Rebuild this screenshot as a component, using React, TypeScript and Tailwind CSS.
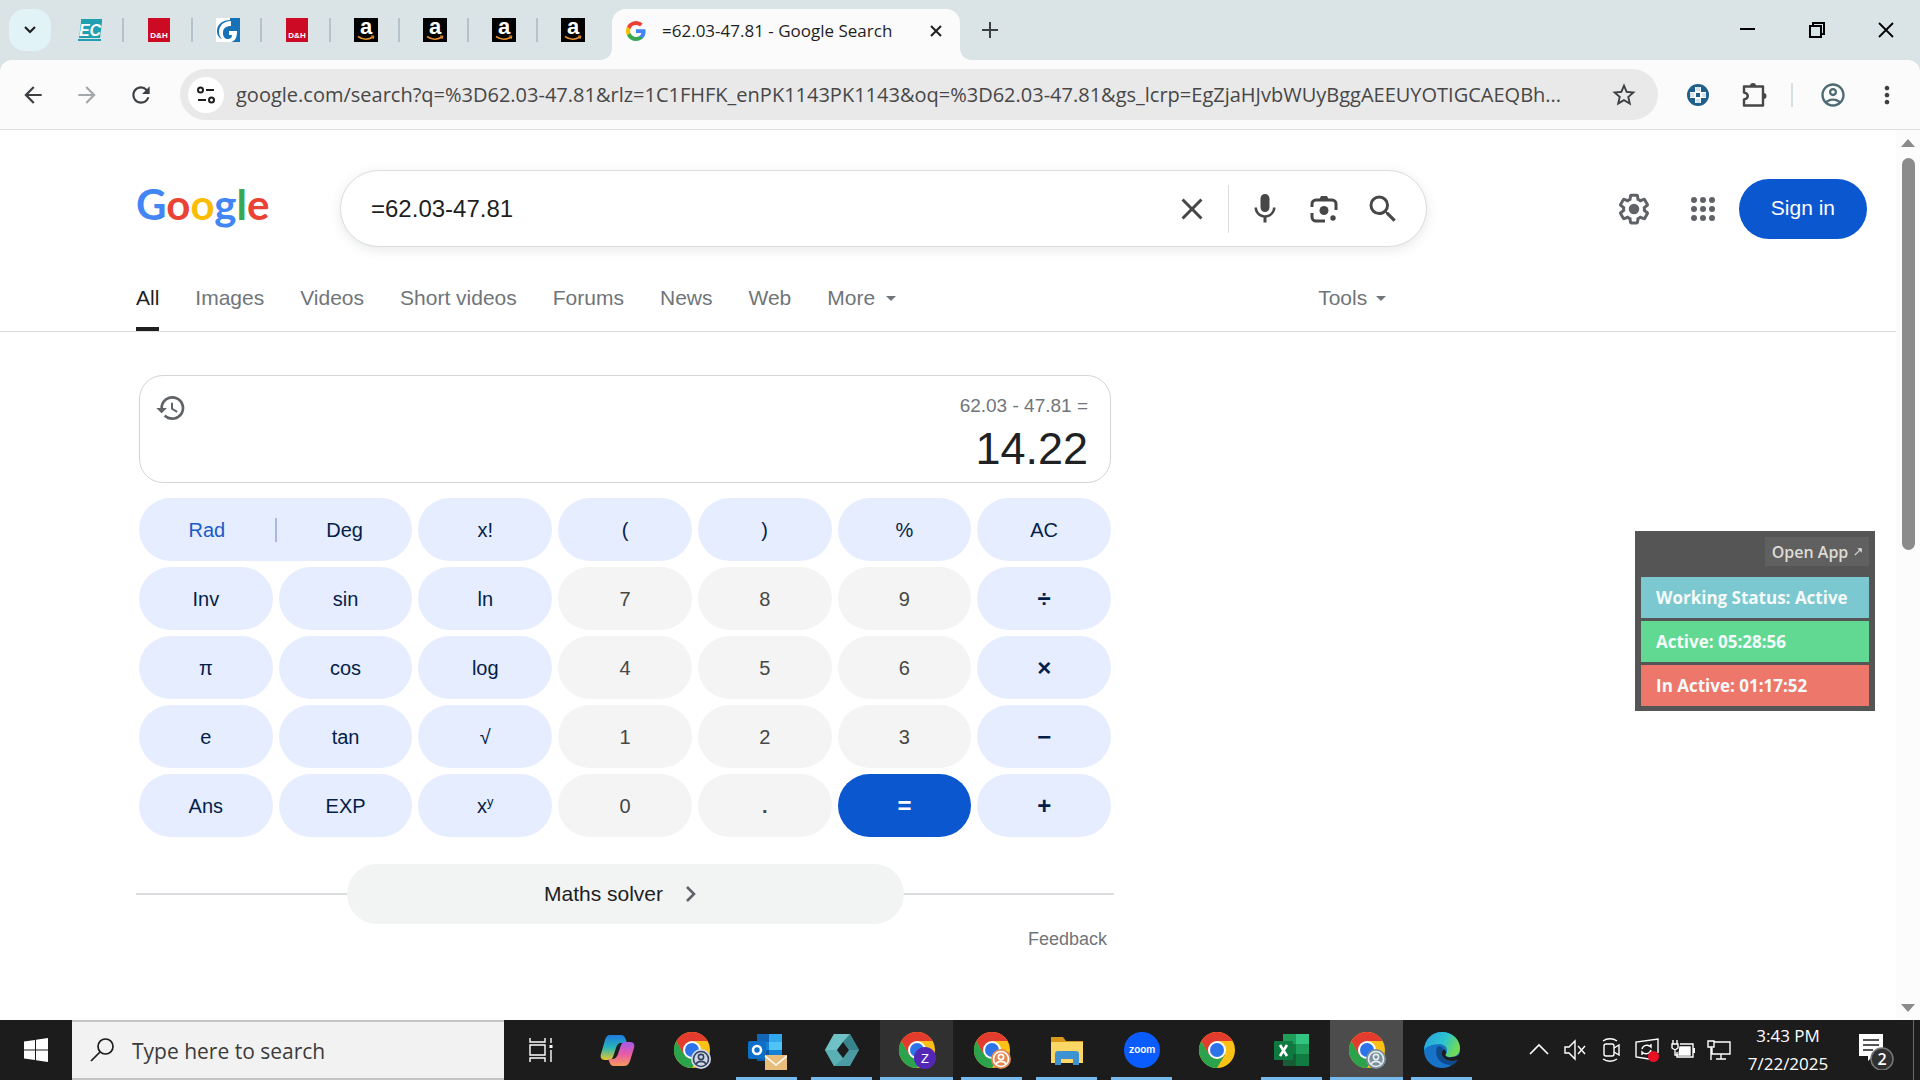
import type { ReactNode } from "react";
import clsx from "clsx";
import {
  MdArrowBack,
  MdArrowForward,
  MdClose,
  MdHistory,
  MdMic,
  MdMoreVert,
  MdOutlineAccountCircle,
  MdRefresh,
  MdSearch,
  MdStarOutline,
} from "react-icons/md";

const UI_FONT = "font-['Segoe_UI','Open_Sans','Noto_Sans',sans-serif]";
const PAGE_FONT = "font-['Liberation_Sans',Arial,sans-serif]";

/* ---------- favicons ---------- */

function EcIcon() {
  return (
    <svg viewBox="0 0 24 24" className="size-6 overflow-visible">
      <path d="M3 1h21v3l-2 16H1l2-16z" fill="#1f9fb0" />
      <rect y="21" width="23" height="2" fill="#1f9fb0" />
      <text x="12" y="18" textAnchor="middle" fontFamily="Liberation Sans" fontSize="16" fontWeight="700" fontStyle="italic" fill="#fff">
        EC
      </text>
    </svg>
  );
}

function DhIcon() {
  return (
    <svg viewBox="0 0 24 24" className="size-6">
      <rect x="1" width="22" height="24" fill="#cc0a24" />
      <text x="12" y="20" textAnchor="middle" fontFamily="Liberation Sans" fontSize="8" fontWeight="700" fill="#fff">
        D&amp;H
      </text>
    </svg>
  );
}

function BlueGIcon() {
  return (
    <svg viewBox="0 0 24 24" className="size-6">
      <rect width="24" height="24" fill="#fff" />
      <path d="M14 0h10v24h-9c4-1 6-4 6-11h-8v4h3c0 3-2 4-4 4-3 0-5-2-5-6 0-5 3-7 8-7V3C7 3 3 8 3 14c0 3 1 5 3 7-3-1-5-4-5-8C1 6 7 2 14 2z" fill="#1673b8" />
    </svg>
  );
}

function AmazonIcon() {
  return (
    <svg viewBox="0 0 24 24" className="size-6 overflow-visible">
      <rect width="24" height="24" fill="#000" />
      <text x="12" y="16" textAnchor="middle" fontFamily="Liberation Sans" fontSize="22" fontWeight="700" fill="#fff">
        a
      </text>
      <path d="M4 18.500c5 3.500 10 3.500 15 .5" stroke="#e8912d" strokeWidth="1.600" fill="none" />
      <path d="M17 18h3l-1 3" stroke="#e8912d" strokeWidth="1" fill="none" />
    </svg>
  );
}

function GoogleG() {
  return (
    <svg viewBox="0 0 24 24" className="size-5">
      <path fill="#4285f4" d="M23.500 12.300c0-.8-.1-1.600-.2-2.300H12v4.500h6.500a5.500 5.500 0 0 1-2.400 3.600v3h3.900c2.300-2.100 3.500-5.200 3.500-8.800z" />
      <path fill="#34a853" d="M12 24c3.200 0 6-1.100 8-2.900l-3.900-3a7.200 7.200 0 0 1-10.800-3.800H1.300v3.100A12 12 0 0 0 12 24z" />
      <path fill="#fbbc05" d="M5.300 14.300a7.200 7.200 0 0 1 0-4.600V6.600H1.300a12 12 0 0 0 0 10.800z" />
      <path fill="#ea4335" d="M12 4.800c1.800 0 3.300.6 4.600 1.800l3.400-3.400A12 12 0 0 0 1.300 6.600l4 3.100A7.200 7.200 0 0 1 12 4.800z" />
    </svg>
  );
}

const pinnedTabs = [
  { name: "EC", icon: <EcIcon /> },
  { name: "D&H", icon: <DhIcon /> },
  { name: "G store", icon: <BlueGIcon /> },
  { name: "D&H orders", icon: <DhIcon /> },
  { name: "Amazon 1", icon: <AmazonIcon /> },
  { name: "Amazon 2", icon: <AmazonIcon /> },
  { name: "Amazon 3", icon: <AmazonIcon /> },
  { name: "Amazon 4", icon: <AmazonIcon /> },
];

/* ---------- browser chrome ---------- */

function TabStrip() {
  return (
    <div className="flex h-[60px] items-center bg-[#dae4e6]">
      <button aria-label="Search tabs" className="ml-[9px] flex size-[42px] items-center justify-center rounded-2xl bg-[#e2f3f8]">
        <svg viewBox="0 0 12 8" className="h-2 w-3" fill="none" stroke="#1f1f1f" strokeWidth="2.200">
          <path d="M1 1l5 5 5-5" />
        </svg>
      </button>
      <div className="ml-1 flex items-center">
        {pinnedTabs.map((tab, i) => (
          <div key={tab.name} className="flex w-[69px] items-center justify-between">
            <button aria-label={tab.name} className="ml-[23px]">
              {tab.icon}
            </button>
            {i < pinnedTabs.length - 1 && <span className="h-6 w-[2px] bg-[#b3c3c9]" />}
          </div>
        ))}
      </div>
      <div className="ml-[-7px] flex h-full items-end">
        <svg viewBox="0 0 12 12" className="size-3" fill="#fbfbfb">
          <path d="M12 0v12H0C7 12 12 7 12 0z" />
        </svg>
        <div className="flex h-[51px] w-[348px] items-center rounded-t-[14px] bg-[#fbfbfb] pr-3 pb-2 pl-[14px]">
          <GoogleG />
          <span className="ml-4 flex-1 text-[17px] whitespace-nowrap text-[#1f1f1f]">=62.03-47.81 - Google Search</span>
          <button aria-label="Close tab" className="flex size-6 items-center justify-center">
            <svg viewBox="0 0 12 12" className="size-3" stroke="#1f1f1f" strokeWidth="2">
              <path d="M1 1l10 10M11 1L1 11" />
            </svg>
          </button>
        </div>
        <svg viewBox="0 0 12 12" className="size-3" fill="#fbfbfb">
          <path d="M0 0v12h12C5 12 0 7 0 0z" />
        </svg>
      </div>
      <button aria-label="New tab" className="ml-[10px]">
        <svg viewBox="0 0 16 16" className="size-4" stroke="#3c4043" strokeWidth="2">
          <path d="M8 0v16M0 8h16" />
        </svg>
      </button>
      <div className="mr-[26px] ml-auto flex items-center gap-[53px]">
        <button aria-label="Minimise">
          <svg viewBox="0 0 16 16" className="size-4" stroke="#000" strokeWidth="2">
            <path d="M0 7h15" />
          </svg>
        </button>
        <button aria-label="Restore">
          <svg viewBox="0 0 16 16" className="size-4" fill="none" stroke="#000" strokeWidth="2">
            <path d="M1 4h11v11H1zM4 4V1h11v11h-3" />
          </svg>
        </button>
        <button aria-label="Close">
          <svg viewBox="0 0 16 16" className="size-4" stroke="#000" strokeWidth="1.800">
            <path d="M1 1l14 14M15 1L1 15" />
          </svg>
        </button>
      </div>
    </div>
  );
}

function AddressBar() {
  return (
    <div className="bg-[#dae4e6]">
      <div className="flex h-[70px] items-center rounded-t-[12px] border-b border-[#dcdfe0] bg-[#fbfbfb] pl-5">
        <button aria-label="Back" className="w-[54px]">
          <MdArrowBack className="size-[26px] text-[#3c4043]" />
        </button>
        <button aria-label="Forward" className="w-[54px]">
          <MdArrowForward className="size-[26px] text-[#a5a8aa]" />
        </button>
        <button aria-label="Reload" className="w-[52px]">
          <MdRefresh className="size-[26px] text-[#3c4043]" />
        </button>
        <div className="flex h-[51px] flex-1 items-center rounded-full bg-[#e9e9ea] pr-5 pl-2">
          <button aria-label="View site information" className="flex size-9 shrink-0 items-center justify-center rounded-full bg-white">
            <svg viewBox="0 0 20 20" className="size-5" fill="none" stroke="#1f1f1f" strokeWidth="2">
              <circle cx="4.500" cy="5" r="2.500" />
              <path d="M10 5h8M2 15h8" />
              <circle cx="15.500" cy="15" r="2.500" />
            </svg>
          </button>
          <input
            aria-label="Address and search bar"
            className="ml-3 min-w-0 flex-1 bg-transparent text-[20px] text-[#474747] outline-none"
            defaultValue="google.com/search?q=%3D62.03-47.81&rlz=1C1FHFK_enPK1143PK1143&oq=%3D62.03-47.81&gs_lcrp=EgZjaHJvbWUyBggAEEUYOTIGCAEQBh..."
          />
          <button aria-label="Bookmark this tab" className="ml-4">
            <MdStarOutline className="size-7 text-[#3c4043]" />
          </button>
        </div>
        <div className="ml-[29px] flex items-center">
          <button aria-label="Extension">
            <svg viewBox="0 0 22 22" className="size-[22px]">
              <circle cx="11" cy="11" r="11" fill="#1f5f8b" />
              <path d="M8 3h6v5h5v6h-5v5H8v-5H3V8h5z" fill="#fff" />
              <path d="M9 3h4v4H9zM3 9h4v4H3zM15 9h4v4h-4zM9 15h4v4H9z" fill="#d4e4ee" />
              <path d="M9 9h4v4H9z" fill="#1f5f8b" />
            </svg>
          </button>
          <button aria-label="Extensions" className="ml-[31px]">
            <svg viewBox="0 0 28 28" className="size-7" fill="none" stroke="#474747" strokeWidth="2.400" strokeLinejoin="round">
              <path d="M4 5.500h19v19H4v-6c5-1 5-6 0-7z" />
              <path d="M10 5a3 3 0 0 1 6 0zM23.500 12a3 3 0 0 1 0 6z" fill="#474747" stroke="none" />
            </svg>
          </button>
          <span className="ml-[23px] h-6 w-[2px] bg-[#d7dfe2]" />
          <button aria-label="Profile" className="ml-[26px]">
            <MdOutlineAccountCircle className="size-[28px] text-[#4d6a72]" />
          </button>
          <button aria-label="Menu" className="mr-[19px] ml-[26px]">
            <MdMoreVert className="size-[28px] text-[#3c4043]" />
          </button>
        </div>
      </div>
    </div>
  );
}

/* ---------- search page ---------- */

function GoogleLogo() {
  return (
    <a href="#home" aria-label="Google home" className="w-[204px] shrink-0 pb-[10px] font-['Lato',sans-serif] text-[42px] leading-[50px] font-bold">
      <span className="text-[#4285f4]">G</span>
      <span className="text-[#ea4335]">o</span>
      <span className="text-[#fbbc05]">o</span>
      <span className="text-[#4285f4]">g</span>
      <span className="text-[#34a853]">l</span>
      <span className="text-[#ea4335]">e</span>
    </a>
  );
}

function LensIcon() {
  return (
    <svg viewBox="0 0 28 28" className="size-7" fill="none" stroke="#474747" strokeWidth="3">
      <path d="M2 12V9a4 4 0 0 1 4-4h16a4 4 0 0 1 4 4v6" />
      <path d="M2 18v4a4 4 0 0 0 4 4h9" />
      <path d="M9 5l2-4h6l2 4z" fill="#474747" stroke="none" />
      <circle cx="14" cy="15.500" r="4.500" fill="#474747" stroke="none" />
      <circle cx="23" cy="23" r="2.700" fill="#474747" stroke="none" />
    </svg>
  );
}

function SettingsIcon() {
  return (
    <svg viewBox="0 0 24 24" className="size-9" fill="#5f6368">
      <path d="M13.850 22.250h-3.700c-.74 0-1.360-.54-1.450-1.270l-.27-1.890c-.27-.14-.53-.29-.79-.46l-1.800.72c-.7.26-1.470-.03-1.810-.65L2.200 15.530c-.35-.66-.2-1.440.36-1.880l1.530-1.190c-.01-.15-.02-.3-.02-.46 0-.15.01-.31.02-.46l-1.520-1.190c-.59-.45-.74-1.260-.37-1.880l1.850-3.190c.34-.62 1.110-.9 1.790-.63l1.810.73c.26-.17.52-.32.78-.46l.27-1.910c.09-.7.71-1.250 1.440-1.250h3.700c.74 0 1.360.54 1.450 1.270l.27 1.890c.27.14.53.29.79.46l1.800-.72c.71-.26 1.480.03 1.820.65l1.840 3.180c.36.66.2 1.440-.36 1.880l-1.520 1.190c.01.15.02.3.02.46s-.01.31-.02.46l1.520 1.190c.56.45.72 1.230.37 1.860l-1.860 3.220c-.34.62-1.110.9-1.800.63l-1.800-.72c-.26.17-.52.32-.78.46l-.27 1.910c-.1.68-.72 1.220-1.460 1.220zm-3.230-2h2.760l.37-2.550.53-.22c.44-.18.88-.44 1.340-.78l.45-.34 2.380.96 1.380-2.400-2.030-1.580.07-.56c.03-.26.06-.51.06-.78s-.03-.53-.06-.78l-.07-.56 2.030-1.580-1.390-2.400-2.390.96-.45-.35c-.42-.32-.87-.58-1.330-.77l-.52-.22-.37-2.550h-2.760l-.37 2.550-.53.21c-.44.19-.88.44-1.340.79l-.45.33-2.380-.95-1.390 2.390 2.030 1.580-.07.56a7 7 0 0 0-.06.79c0 .26.02.53.06.78l.07.56-2.030 1.580 1.380 2.400 2.390-.96.45.35c.43.33.86.58 1.330.77l.53.22z" />
      <circle cx="12" cy="12" r="3.500" />
    </svg>
  );
}

function AppsIcon() {
  return (
    <svg viewBox="0 0 24 24" className="size-6" fill="#5f6368">
      {[3, 12, 21].map((y) => [3, 12, 21].map((x) => <circle key={`${x}-${y}`} cx={x} cy={y} r="3" />))}
    </svg>
  );
}

function Caret() {
  return <span className="border-x-[5px] border-t-[5px] border-x-transparent border-t-[#70757a]" />;
}

function SearchHeader() {
  return (
    <div className="flex items-center pt-[40px] pr-[29px] pl-[136px]">
      <GoogleLogo />
      <form className="flex h-[77px] max-w-[1087px] flex-1 items-center rounded-full border border-[#dadce0] bg-white pr-[25px] pl-[30px] shadow-[0_3px_12px_rgba(60,64,67,0.12)]">
        <input aria-label="Search" className="min-w-0 flex-1 text-[24px] text-[#1f1f1f] outline-none" defaultValue="=62.03-47.81" />
        <button type="button" aria-label="Clear">
          <MdClose className="size-9 text-[#474747]" />
        </button>
        <span className="mx-[18px] h-12 w-px bg-[#dadce0]" />
        <div className="flex items-center gap-[23px]">
          <button type="button" aria-label="Search by voice">
            <MdMic className="size-9 text-[#474747]" />
          </button>
          <button type="button" aria-label="Search by image" className="flex size-9 items-center justify-center">
            <LensIcon />
          </button>
          <button type="submit" aria-label="Google Search">
            <MdSearch className="size-9 text-[#474747]" />
          </button>
        </div>
      </form>
      <div className="ml-auto flex items-center">
        <button aria-label="Settings">
          <SettingsIcon />
        </button>
        <button aria-label="Google apps" className="ml-[39px]">
          <AppsIcon />
        </button>
        <a href="#signin" className="ml-6 flex h-[60px] items-center rounded-full bg-[#0b57d0] px-8 pb-[2px] text-[21px] text-white">
          Sign in
        </a>
      </div>
    </div>
  );
}

const sections = ["Images", "Videos", "Short videos", "Forums", "News", "Web"];

function SectionNav() {
  return (
    <nav className="mt-[31px] flex items-start border-b border-[#dadce0] pl-[136px] text-[21px] leading-10 text-[#70757a]">
      <div className="flex gap-9">
        <a href="#all" className="h-[53px] border-b-4 border-[#1f1f1f] text-[#1f1f1f]">
          All
        </a>
        {sections.map((name) => (
          <a key={name} href="#section">
            {name}
          </a>
        ))}
        <button className="flex items-center gap-[11px] self-start">
          More <Caret />
        </button>
      </div>
      <button className="ml-[422px] flex items-center gap-[9px]">
        Tools <Caret />
      </button>
    </nav>
  );
}

type Key = { label: ReactNode; name?: string; kind?: "digit" | "equals" | "operator" };

const keys: Key[] = [
  { label: "x!" },
  { label: "(" },
  { label: ")" },
  { label: "%" },
  { label: "AC" },
  { label: "Inv" },
  { label: "sin" },
  { label: "ln" },
  { label: "7", kind: "digit" },
  { label: "8", kind: "digit" },
  { label: "9", kind: "digit" },
  { label: "÷", kind: "operator" },
  { label: "π" },
  { label: "cos" },
  { label: "log" },
  { label: "4", kind: "digit" },
  { label: "5", kind: "digit" },
  { label: "6", kind: "digit" },
  { label: "×", kind: "operator" },
  { label: "e" },
  { label: "tan" },
  { label: "√" },
  { label: "1", kind: "digit" },
  { label: "2", kind: "digit" },
  { label: "3", kind: "digit" },
  { label: "−", kind: "operator" },
  { label: "Ans" },
  { label: "EXP" },
  {
    label: (
      <span>
        x<sup className="text-[13px]">y</sup>
      </span>
    ),
    name: "x to the power of y",
  },
  { label: "0", kind: "digit" },
  { label: <b>.</b>, kind: "digit" },
  { label: "=", kind: "equals" },
  { label: "+", kind: "operator" },
];

function Calculator() {
  return (
    <section aria-label="Calculator" className="w-full max-w-[978px]">
      <div className="mx-[3px] flex h-[108px] items-start justify-between rounded-[24px] border border-[#d3d5d8] px-[15px] pt-4 pr-[22px]">
        <button aria-label="History">
          <MdHistory className="size-8 text-[#5f6368]" />
        </button>
        <div className="text-right">
          <div className="text-[19px] leading-7 text-[#70757a]">62.03 - 47.81 =</div>
          <div className="mt-1 text-[45px] leading-[50px] text-[#202124]">14.22</div>
        </div>
      </div>
      <div className="mx-[3px] mt-[15px] grid grid-cols-7 gap-[6px] text-[20px] text-[#041e49]">
        <div className="col-span-2 flex h-[63px] items-center rounded-full bg-[#e6edfe]">
          <button className="flex-1 text-[#1b5bc7]">Rad</button>
          <span className="h-6 w-[2px] bg-[#aab9de]" />
          <button className="flex-1">Deg</button>
        </div>
        {keys.map((key, i) => (
          <button
            key={i}
            aria-label={key.name}
            className={clsx(
              "flex h-[63px] items-center justify-center rounded-full",
              key.kind === "digit" && "bg-[#f4f4f4] text-[#474747]",
              key.kind === "equals" && "bg-[#0b57d0] text-[24px] font-bold text-white",
              key.kind === "operator" && "bg-[#e6edfe] text-[24px] font-bold",
              !key.kind && "bg-[#e6edfe]",
            )}
          >
            {key.label}
          </button>
        ))}
      </div>
      <div className="mt-[27px] flex items-center">
        <span className="h-[2px] flex-1 bg-[#dadce0]" />
        <button className="flex h-[60px] w-[557px] items-center justify-center gap-[23px] rounded-full bg-[#f2f3f3] pr-[10px] text-[21px] text-[#202124]">
          Maths solver
          <svg viewBox="0 0 10 16" className="h-4 w-[10px]" fill="none" stroke="#5f6368" strokeWidth="2.600">
            <path d="M1 1l7 7-7 7" />
          </svg>
        </button>
        <span className="h-[2px] flex-1 bg-[#dadce0]" />
      </div>
      <div className="mt-[2px] flex justify-end pr-[7px]">
        <a href="#feedback" className="text-[18px] leading-[26px] text-[#70757a]">
          Feedback
        </a>
      </div>
    </section>
  );
}

function ScrollBar() {
  return (
    <div className="flex w-6 flex-col items-center bg-[#fcfcfc] pt-[9px] pb-2">
      <span className="border-x-[7px] border-b-8 border-x-transparent border-b-[#8b8b8b]" />
      <span className="mt-[11px] h-[392px] w-[13px] rounded-full bg-[#8b8b8b]" />
      <span className="mt-auto border-x-[7px] border-t-8 border-x-transparent border-t-[#8b8b8b]" />
    </div>
  );
}

function StatusWidget() {
  return (
    <aside className="absolute top-[531px] right-[45px] w-[240px] bg-[#555555] p-[6px] pb-[5px] text-[17px] font-bold text-[#f5fbfa]">
      <button className="ml-auto flex h-[29px] w-[104px] items-center justify-center gap-[6px] bg-[#606060] font-['Open_Sans',sans-serif] text-[16px] font-semibold text-[#dedbd6]">
        Open App
        <svg viewBox="0 0 10 10" className="size-2" stroke="#dedbd6" strokeWidth="1.500" fill="#dedbd6">
          <path d="M1 9l6-6" />
          <path d="M6 1h3v3z" />
        </svg>
      </button>
      <div className="mt-[11px] flex flex-col gap-[3px]">
        <div className="flex h-[41px] items-center bg-[#7bc8d0] pl-[15px]">Working Status: Active</div>
        <div className="flex h-[41px] items-center bg-[#62d993] pl-[15px]">Active: 05:28:56</div>
        <div className="flex h-[41px] items-center bg-[#ee776b] pl-[15px]">In Active: 01:17:52</div>
      </div>
    </aside>
  );
}

/* ---------- taskbar ---------- */

function ChromeIcon({ badge }: { badge?: ReactNode }) {
  return (
    <svg viewBox="0 0 40 40" className="size-10">
      <circle cx="20" cy="20" r="18" fill="#fbc116" />
      <path d="M4.400 11A18 18 0 0 0 20 38l8-13.500L12.200 24.500z" fill="#2ba24c" />
      <path d="M4.400 11A18 18 0 0 1 35.600 11H20l-8 13.500z" fill="#e33b2e" />
      <circle cx="20" cy="20" r="9" fill="#fff" />
      <circle cx="20" cy="20" r="7" fill="#2c74e8" />
      {badge}
    </svg>
  );
}

function PersonBadge({ ring, fill }: { ring: string; fill: string }) {
  return (
    <g fill="none" stroke={ring} strokeWidth="1.600">
      <circle cx="29" cy="29" r="10" fill={fill} stroke="none" />
      <circle cx="29" cy="29" r="7.500" />
      <circle cx="29" cy="27" r="2.600" />
      <path d="M24 34c2-3.500 8-3.500 10 0" />
    </g>
  );
}

function CopilotIcon() {
  return (
    <svg viewBox="0 0 40 40" className="size-10">
      <defs>
        <linearGradient id="copilot-left" x1="0" y1="0" x2="0" y2="1">
          <stop offset="0" stopColor="#1f7ae0" />
          <stop offset="0.500" stopColor="#27b5b8" />
          <stop offset="1" stopColor="#e8c72e" />
        </linearGradient>
        <linearGradient id="copilot-right" x1="0" y1="0" x2="0" y2="1">
          <stop offset="0" stopColor="#a45ae8" />
          <stop offset="0.500" stopColor="#e85aa8" />
          <stop offset="1" stopColor="#f59a5a" />
        </linearGradient>
      </defs>
      <path d="M13 5h11c3 0 4 2 5 5l1 3h-5c-4 0-5 2-6 5l-3 9c-1 2-2 3-4 3H8c-4 0-5-3-4-6l4-14c1-3 2-5 5-5z" fill="url(#copilot-left)" />
      <path d="M27 36H17c-3 0-4-2-5-5l-1-2h4c3 0 5-2 6-5l3-9c1-2 2-3 4-3h5c4 0 5 3 4 6l-4 13c-1 3-3 5-6 5z" fill="url(#copilot-right)" />
    </svg>
  );
}

function OutlookIcon() {
  return (
    <svg viewBox="0 0 40 40" className="size-10">
      <path d="M10 4h25v27H10z" fill="#1282d6" />
      <path d="M10 4h12v8H10z" fill="#1066b5" />
      <path d="M22 4h13v8H22z" fill="#31a8ee" />
      <path d="M22 12h13v8H22z" fill="#50c5f5" />
      <path d="M10 20h12v11H10z" fill="#0c59a4" />
      <rect x="1" y="11" width="18" height="18" rx="2" fill="#0f6fc6" />
      <circle cx="10" cy="20" r="4" fill="none" stroke="#fff" strokeWidth="2.600" />
      <rect x="18" y="25" width="22" height="15" fill="#e9bd7c" />
      <path d="M18 26l11 9 11-9" fill="none" stroke="#fff" strokeWidth="1.500" />
    </svg>
  );
}

function HexIcon() {
  return (
    <svg viewBox="0 0 40 40" className="size-10">
      <path d="M12 4h16l9 16-9 16H12L3 20z" fill="#4a9ba3" />
      <path d="M12 4h16l-7 8-7 9-11-1z" fill="#6fc1c6" />
      <path d="M3 20h11l7 9-9 7z" fill="#5bb0b6" />
      <path d="M28 4l9 16h-9l-7-8z" fill="#37848d" />
      <path d="M21 12l6 8-6 8-6-8z" fill="#1c1c1c" />
    </svg>
  );
}

function FolderIcon() {
  return (
    <svg viewBox="0 0 40 40" className="size-10">
      <path d="M4 7h12l3 4h17v6H4z" fill="#d99a1c" />
      <path d="M4 12h32v21H4z" fill="#fbd765" />
      <path d="M8 35V24a3 3 0 0 1 3-3h18a3 3 0 0 1 3 3v11h-6v-6H14v6z" fill="#3f92d2" />
    </svg>
  );
}

function ZoomIcon() {
  return (
    <svg viewBox="0 0 40 40" className="size-10">
      <circle cx="20" cy="20" r="18" fill="#0b5cff" />
      <text x="20" y="23" textAnchor="middle" fontFamily="Inter" fontSize="10" fontWeight="600" fill="#fff">
        zoom
      </text>
    </svg>
  );
}

function ExcelIcon() {
  return (
    <svg viewBox="0 0 40 40" className="size-10">
      <path d="M11 4h26v32H11z" fill="#1f9d5b" />
      <path d="M24 4h13v10H24z" fill="#33c481" />
      <path d="M11 14h13v10H11z" fill="#107c41" />
      <path d="M11 24h26v12H11z" fill="#185c37" />
      <path d="M24 24h13v12H24z" fill="#107c41" />
      <rect x="2" y="11" width="19" height="19" rx="1" fill="#0f7a40" />
      <path d="M8 15l7 11M15 15L8 26" stroke="#fff" strokeWidth="2.600" />
    </svg>
  );
}

function EdgeIcon() {
  return (
    <svg viewBox="0 0 40 40" className="size-10">
      <defs>
        <linearGradient id="edge-top" x1="0" y1="0" x2="1" y2="0.400">
          <stop offset="0" stopColor="#2a9fe0" />
          <stop offset="0.600" stopColor="#2cc3d0" />
          <stop offset="1" stopColor="#6edb5a" />
        </linearGradient>
      </defs>
      <circle cx="20" cy="20" r="18" fill="#1673c8" />
      <path d="M2 20C3 9 10 2 20 2c11 0 18 8 18 16 0 6-4 9-9 9-4 0-6-1-5-3 2-2 2-9-6-10-8 0-14 3-16 6z" fill="url(#edge-top)" />
      <path d="M15 17c-3 9 3 18 14 18 2 0 5-2 7-5-5 2-14 2-16-5-1-3 0-5 1-7-2-2-4-2-6-1z" fill="#0f4b8c" />
      <path d="M22 19c2 2 3 4 1 6 1 2 4 3 7 2 3 0 6-1 8-4 0 3-1 5-3 7-5 2-13 1-15-5-1-2 0-5 2-6z" fill="#1c1c1c" />
    </svg>
  );
}

function TaskbarApp({ name, icon, state }: { name: string; icon: ReactNode; state?: "open" | "hover" | "active" }) {
  return (
    <button
      aria-label={name}
      className={clsx(
        "flex h-[60px] w-[75px] flex-col items-center border-x border-[#1c1c1c] pt-[10px]",
        state === "hover" && "bg-[#303030]",
        state === "active" && "bg-[#4c4c4c]",
      )}
    >
      {icon}
      {state && <span className={clsx("mt-auto h-[3px] bg-[#76b9ed]", state === "open" ? "w-[61px]" : "w-full")} />}
    </button>
  );
}

function Taskbar() {
  return (
    <footer className="flex h-[60px] bg-[#1c1c1c] text-white">
      <button aria-label="Start" className="flex w-[72px] items-center justify-center">
        <svg viewBox="0 0 24 24" className="size-6" fill="#fff">
          <path d="M0 3.500L11 2v9.500H0zM12 1.800L24 0v11.500H12zM0 12.500h11V22L0 20.500zM12 12.500h12V24l-12-1.800z" />
        </svg>
      </button>
      <label className="flex w-[432px] items-center border-y-2 border-[#c4c4c4] bg-[#f2f2f2] pl-[18px]">
        <svg viewBox="0 0 24 24" className="size-6" fill="none" stroke="#1c1c1c" strokeWidth="1.700">
          <circle cx="15.500" cy="8.500" r="7.500" />
          <path d="M10 14l-9 9" />
        </svg>
        <input
          aria-label="Type here to search"
          placeholder="Type here to search"
          className="ml-[18px] min-w-0 flex-1 pt-1 text-[21px] outline-none placeholder:text-[#3b3b3b]"
        />
      </label>
      <button aria-label="Task view" className="flex w-[73px] items-center justify-center">
        <svg viewBox="0 0 24 24" className="size-6" fill="none" stroke="#fff" strokeWidth="1.400">
          <path d="M1 0v4h15V0M1 24v-4h15v4M1 7h15v10H1zM22 0v5M22 12v12" />
          <rect x="20.500" y="7" width="3" height="3" fill="#fff" stroke="none" />
        </svg>
      </button>
      <div className="ml-[2px] flex">
        <TaskbarApp name="Copilot" icon={<CopilotIcon />} />
        <TaskbarApp name="Chrome, personal" icon={<ChromeIcon badge={<PersonBadge ring="#33415c" fill="#cfd6e6" />} />} />
        <TaskbarApp name="Outlook" state="open" icon={<OutlookIcon />} />
        <TaskbarApp name="Tracker" state="open" icon={<HexIcon />} />
        <TaskbarApp
          name="Chrome, Z"
          state="hover"
          icon={
            <ChromeIcon
              badge={
                <>
                  <circle cx="28" cy="28" r="11" fill="#5327b5" />
                  <text x="28" y="33" textAnchor="middle" fontFamily="Liberation Sans" fontSize="13" fill="#fff">
                    Z
                  </text>
                </>
              }
            />
          }
        />
        <TaskbarApp name="Chrome, work" state="open" icon={<ChromeIcon badge={<PersonBadge ring="#fff" fill="#e38853" />} />} />
        <TaskbarApp name="File Explorer" state="open" icon={<FolderIcon />} />
        <TaskbarApp name="Zoom" state="open" icon={<ZoomIcon />} />
        <TaskbarApp name="Chrome" icon={<ChromeIcon />} />
        <TaskbarApp name="Excel" state="open" icon={<ExcelIcon />} />
        <TaskbarApp name="Chrome, guest" state="active" icon={<ChromeIcon badge={<PersonBadge ring="#e6eef2" fill="#7b909b" />} />} />
        <TaskbarApp name="Edge" state="open" icon={<EdgeIcon />} />
      </div>

      <div className="ml-auto flex items-center">
        <div className="flex items-center gap-3">
          <button aria-label="Show hidden icons">
            <svg viewBox="0 0 24 24" className="size-6" fill="none" stroke="#fff" strokeWidth="1.600">
              <path d="M3 16l9-9 9 9" />
            </svg>
          </button>
          <button aria-label="Volume muted">
            <svg viewBox="0 0 24 24" className="size-6" fill="none" stroke="#fff" strokeWidth="1.400">
              <path d="M2 9h4l6-6v18l-6-6H2zM15 8l7 8M22 8l-7 8" />
            </svg>
          </button>
          <button aria-label="Meet now">
            <svg viewBox="0 0 24 24" className="size-6" fill="none" stroke="#fff" strokeWidth="1.400">
              <rect x="5" y="6" width="10" height="12" rx="2" />
              <path d="M15 10l5-3v10l-5-3M4 3c4-3 10-3 14 0M4 21c4 3 10 3 14 0" />
            </svg>
          </button>
          <button aria-label="Updates">
            <svg viewBox="0 0 24 24" className="size-6" fill="none" stroke="#fff" strokeWidth="1.400">
              <path d="M14 21L1 19V4l22-3v14" />
              <path d="M7 11c1-4 6-5 9-2V6M16 12c-1 4-6 5-9 2v3" />
              <circle cx="18.500" cy="18.500" r="5.500" fill="#e81123" stroke="none" />
            </svg>
          </button>
          <button aria-label="Battery">
            <svg viewBox="0 0 24 24" className="size-6" fill="none" stroke="#fff" strokeWidth="1.400">
              <path d="M2 2v4M6 2v4M1 6h6v4l-3 2-3-2zM4 12v5h3M9 6h13v13H6v-5" />
              <path d="M9 9h10v8H8z" fill="#fff" />
              <path d="M23 10v5" strokeWidth="2" />
            </svg>
          </button>
          <button aria-label="Network">
            <svg viewBox="0 0 24 24" className="size-6" fill="none" stroke="#fff" strokeWidth="1.400">
              <path d="M7 4h16v12H5v-6M14 16v5M9 21h10M1 3h6v6H1zM4 9v13" />
            </svg>
          </button>
        </div>
        <div className="w-[114px] text-center text-[17px] leading-7">
          <div>3:43 PM</div>
          <div>7/22/2025</div>
        </div>
        <button aria-label="2 notifications" className="ml-[14px]">
          <svg viewBox="0 0 36 40" className="h-10 w-9">
            <path d="M0 4h24v22H14l-5 5v-5H0z" fill="#fff" />
            <path d="M4 10h16M4 15h16M4 20h10" stroke="#1c1c1c" strokeWidth="1.600" />
            <circle cx="23" cy="29" r="11" fill="#303030" stroke="#777" strokeWidth="1.500" />
            <text x="23" y="35" textAnchor="middle" fontFamily="Open Sans" fontSize="16" fontWeight="600" fill="#fff">
              2
            </text>
          </svg>
        </button>
        <span className="mr-[6px] ml-[18px] h-[60px] w-px bg-[#6a6a6a]" />
      </div>
    </footer>
  );
}

export default function App() {
  return (
    <div className={clsx("relative flex min-h-screen flex-col bg-white", UI_FONT)}>
      <TabStrip />
      <AddressBar />
      <div className="flex flex-1">
        <main className={clsx("flex-1", PAGE_FONT)}>
          <SearchHeader />
          <SectionNav />
          <div className="pt-[43px] pl-[136px]">
            <Calculator />
          </div>
        </main>
        <ScrollBar />
      </div>
      <Taskbar />
      <StatusWidget />
    </div>
  );
}
